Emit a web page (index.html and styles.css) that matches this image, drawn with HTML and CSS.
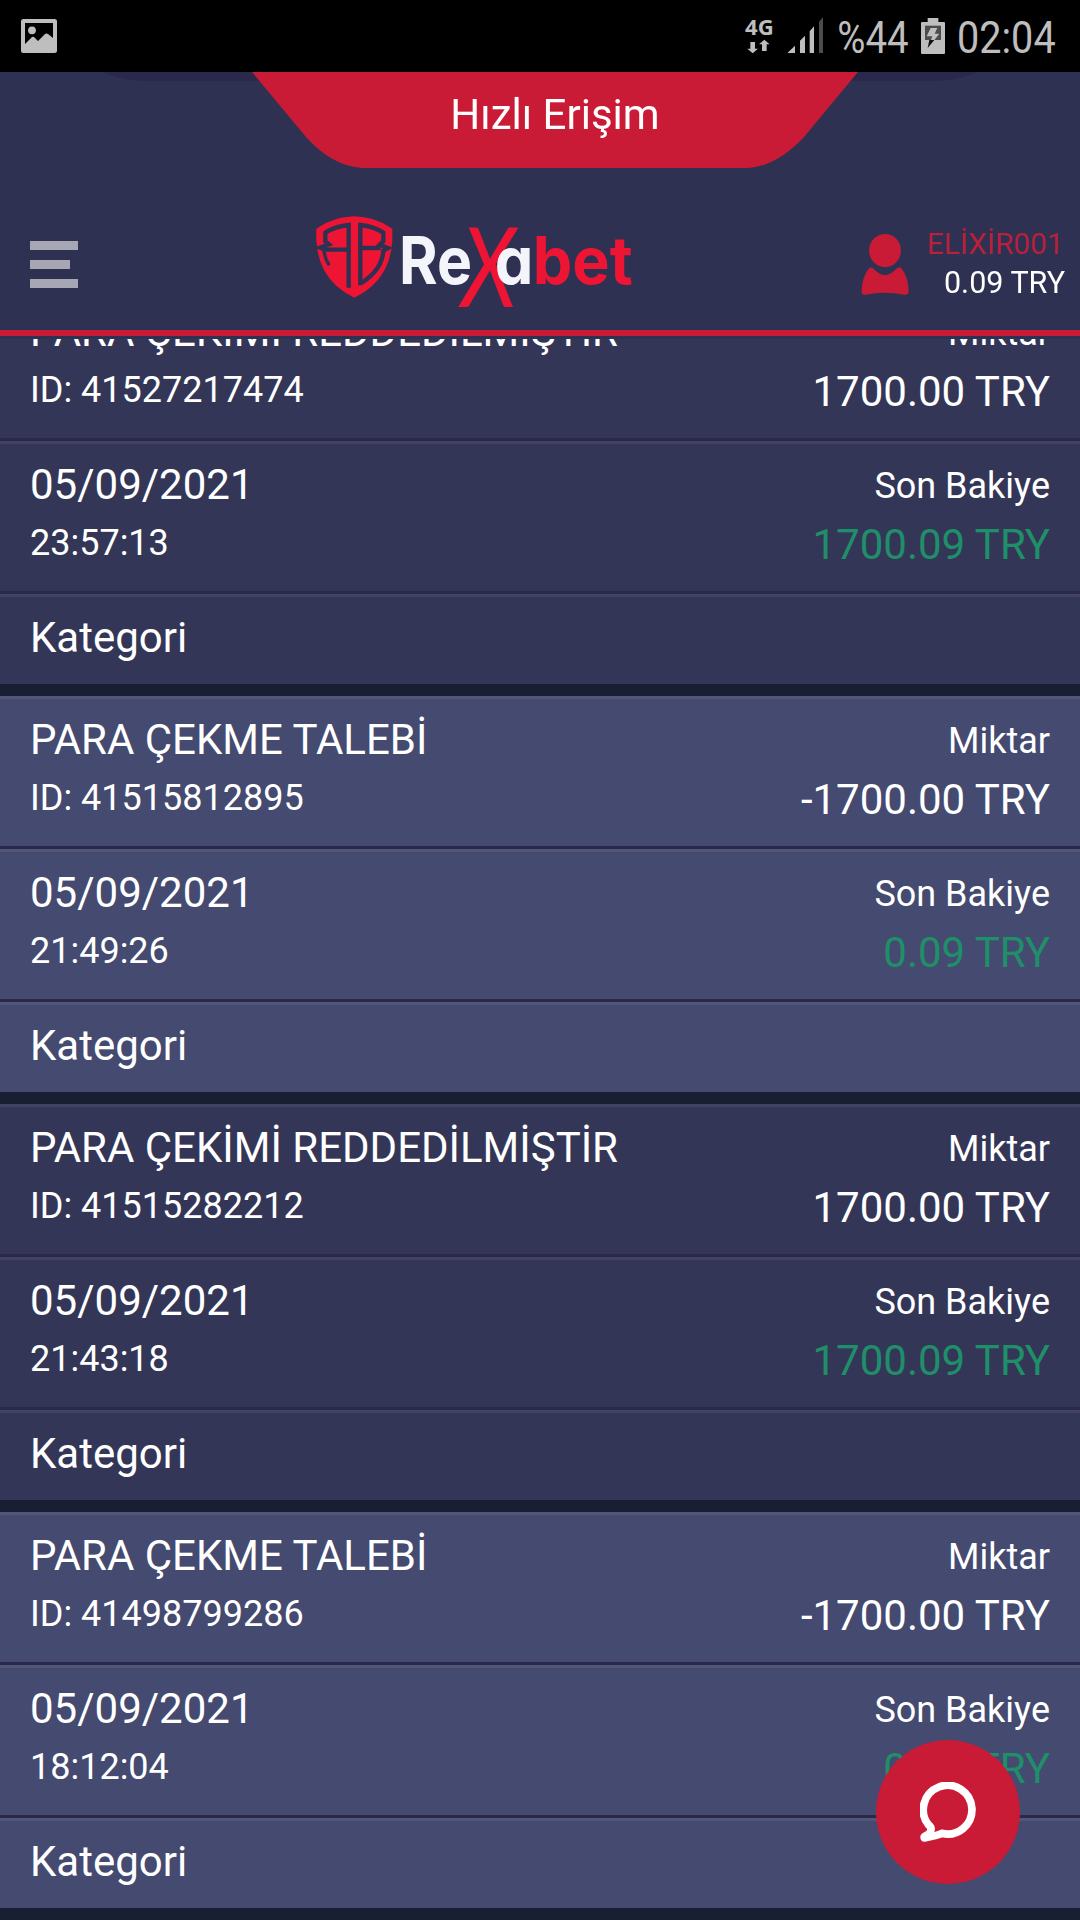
FILE: index.html
```html
<!DOCTYPE html>
<html lang="tr">
<head>
  <meta charset="UTF-8" />
  <meta name="viewport" content="width=device-width, initial-scale=1.0"/>
  <title>Rexabet</title>
  <link rel="stylesheet" href="styles.css">
</head>
<body>
  <header class="header">
    <div class="status-bar">
      <svg class="picture-icon" viewBox="0 0 36 34">
        <path fill-rule="evenodd" fill="#bebebe" d="M2.500 0H33.500Q36 0 36 2.500V31.500Q36 34 33.500 34H2.500Q0 34 0 31.500V2.500Q0 0 2.500 0ZM4 4V25L11 18Q12.500 17 14 19L17 22L24 15Q25.500 14 27 15L32 19V4Z"/>
        <circle cx="11" cy="11.300" r="3.900" fill="#bebebe"/>
      </svg>
      <svg class="status-icons" viewBox="0 0 1080 216">
        <g fill="#bebebe">
          <text x="75" y="105" class="net" textLength="86" lengthAdjust="spacingAndGlyphs">4G</text>
          <path d="M91 126h14v20h9l-16 14-16-14h9zM126 153h14v-20h9l-16-14-16 14h9z"/>
          <path d="M202 159L225 137V159ZM240 122L255 107V159H240ZM269 94L282 79V159H269Z"/>
          <path d="M297 65L309 52V159H297Z" fill="#4c4c4c"/>
          <text x="352" y="159" class="clock" textLength="214" lengthAdjust="spacingAndGlyphs">%44</text>
          <path d="M623 54h32v12h17q3 0 3 3v90q0 3-3 3h-66q-3 0-3-3v-90q0-3 3-3h17z"/>
          <path d="M615 77h48v43h-48z" fill="#4c4c4c"/>
          <path d="M632 84h20l-8 17h14l-15 19h-10l4-11h-17z"/>
          <path d="M628 120h15l-20 24z" fill="#111"/>
          <text x="711" y="159" class="clock" textLength="296" lengthAdjust="spacingAndGlyphs">02:04</text>
        </g>
      </svg>
    </div>

    <div class="quick-access">
      <svg class="quick-shape" viewBox="0 0 1080 96">
        <path fill="#2a294b" d="M103 0Q123 9 145 9H935Q957 9 977 0Z"/>
        <path fill="#ca1b36" d="M252 0L306 65Q332 94 362 96H748Q777 94 804 65L858 0Z"/>
      </svg>
      <span>Hızlı Erişim</span>
    </div>

    <nav class="nav">
      <div class="menu">
        <i></i>
        <i class="short"></i>
        <i></i>
      </div>

      <svg class="logo" viewBox="0 0 1050 390">
        <!-- shield -->
        <path d="M163 49Q226 50 277 86Q285 235 163 293Q41 235 49 86Q100 50 163 49Z" fill="#ee1433"/>
        <g fill="none" stroke="#2f3152" stroke-width="13">
          <path d="M146 263V75Q105 79 76 98V124L87 133L60 143L74 149H110M146 149H110"/>
          <path d="M181 256V75Q221 79 250 98V124L239 134L264 144L250 152Q247 208 186 248"/>
          <path d="M181 144H242"/>
          <path d="M71 147Q75 178 88 196" stroke-width="10"/>
        </g>
        <g class="wordmark">
          <text class="brush" x="484" y="321" fill="#ee1433" textLength="166" lengthAdjust="spacingAndGlyphs">X</text>
          <text x="297" y="253" fill="#f4f4fb" textLength="219" lengthAdjust="spacingAndGlyphs">Re</text>
          <text x="584" y="253" fill="#f4f4fb" textLength="116" lengthAdjust="spacingAndGlyphs">a</text>
          <text x="698" y="253" fill="#ee1433" textLength="300" lengthAdjust="spacingAndGlyphs">bet</text>
        </g>
      </svg>

      <div class="account">
        <svg class="avatar" viewBox="0 0 142 184">
          <ellipse cx="71" cy="50" rx="48" ry="50" fill="#ca1b36"/>
          <path fill="#ca1b36" d="M24 102Q30 99 36 104Q71 144 106 104Q112 99 119 102Q143 130 142 175Q141 184 130 183Q71 172 12 183Q1 184 0 175Q2 127 24 102Z"/>
        </svg>
        <div class="account-text">
          <div class="user">ELİXİR001</div>
          <div>0.09 TRY</div>
        </div>
      </div>
    </nav>
  </header>

  <main class="history">
    <section class="record">
      <div class="row">
        <div class="left"><p class="big">PARA ÇEKİMİ REDDEDİLMİŞTİR</p><p>ID: 41527217474</p></div>
        <div class="right"><p>Miktar</p><p class="big">1700.00 TRY</p></div>
      </div>
      <div class="row">
        <div class="left"><p class="big">05/09/2021</p><p>23:57:13</p></div>
        <div class="right"><p>Son Bakiye</p><p class="big green">1700.09 TRY</p></div>
      </div>
      <div class="row category"><div class="left"><p class="big">Kategori</p></div></div>
    </section>

    <section class="record alt">
      <div class="row">
        <div class="left"><p class="big">PARA ÇEKME TALEBİ</p><p>ID: 41515812895</p></div>
        <div class="right"><p>Miktar</p><p class="big">-1700.00 TRY</p></div>
      </div>
      <div class="row">
        <div class="left"><p class="big">05/09/2021</p><p>21:49:26</p></div>
        <div class="right"><p>Son Bakiye</p><p class="big green">0.09 TRY</p></div>
      </div>
      <div class="row category"><div class="left"><p class="big">Kategori</p></div></div>
    </section>

    <section class="record">
      <div class="row">
        <div class="left"><p class="big">PARA ÇEKİMİ REDDEDİLMİŞTİR</p><p>ID: 41515282212</p></div>
        <div class="right"><p>Miktar</p><p class="big">1700.00 TRY</p></div>
      </div>
      <div class="row">
        <div class="left"><p class="big">05/09/2021</p><p>21:43:18</p></div>
        <div class="right"><p>Son Bakiye</p><p class="big green">1700.09 TRY</p></div>
      </div>
      <div class="row category"><div class="left"><p class="big">Kategori</p></div></div>
    </section>

    <section class="record alt">
      <div class="row">
        <div class="left"><p class="big">PARA ÇEKME TALEBİ</p><p>ID: 41498799286</p></div>
        <div class="right"><p>Miktar</p><p class="big">-1700.00 TRY</p></div>
      </div>
      <div class="row">
        <div class="left"><p class="big">05/09/2021</p><p>18:12:04</p></div>
        <div class="right"><p>Son Bakiye</p><p class="big green">0.09 TRY</p></div>
      </div>
      <div class="row category"><div class="left"><p class="big">Kategori</p></div></div>
    </section>
  </main>

  <div class="chat-button">
    <svg viewBox="0 0 168 180">
      <path d="M32 146Q36 137 26 129A73 73 0 1 1 65 154Q56 160 13 168Q11 163 21 159Q30 156 32 146Z" fill="none" stroke="#fff" stroke-width="23" stroke-linejoin="round"/>
    </svg>
  </div>
</body>
</html>
```
FILE: styles.css
```css
* {
  margin: 0;
  padding: 0;
  box-sizing: border-box;
}

body {
  height: 1920px;
  overflow: hidden;
  background: #181f33;
  color: #fff;
  font-family: Roboto, Arial, sans-serif;
}

svg {
  display: block;
}

/* Header */
.header {
  position: fixed;
  top: 0;
  left: 0;
  width: 100%;
  height: 336px;
  z-index: 2;
  background: #2f3152;
  border-bottom: 6px solid #ca1b36;
  box-shadow: 0 3px 0 #2f3152;
}

.status-bar {
  display: flex;
  justify-content: space-between;
  align-items: center;
  height: 72px;
  padding-left: 21px;
  background: #000;
}

.picture-icon {
  width: 36px;
  height: 34px;
}

.status-icons {
  width: 360px;
  height: 72px;
}

.net {
  font: bold 64px "Open Sans", sans-serif;
}

.clock {
  font-size: 134px;
}

.quick-access {
  position: relative;
  height: 96px;
  font-size: 42px;
  line-height: 85px;
  text-align: center;
  padding-left: 30px;
}

.quick-access span {
  position: relative;
}

.quick-shape {
  position: absolute;
  top: 0;
  left: 0;
  width: 1080px;
  height: 96px;
}

.nav {
  display: grid;
  grid-template-columns: 270px 350px 1fr;
  height: 162px;
  padding: 32px 15px 0 30px;
}

.menu {
  display: flex;
  flex-direction: column;
  gap: 10px;
  padding-top: 41px;
}

.menu i {
  width: 48px;
  height: 9px;
  background: #a6a6b5;
}

.menu .short {
  width: 40px;
}

.logo {
  width: 350px;
  height: 130px;
  overflow: visible;
}

.wordmark {
  font-family: Inter, sans-serif;
  font-size: 196px;
  font-weight: 700;
  font-feature-settings: "cv11";
}

.brush {
  font-family: Lato, sans-serif;
  font-size: 335px;
  font-weight: 400;
  font-style: italic;
}

.account {
  display: flex;
  justify-content: flex-end;
  align-items: flex-start;
  gap: 15px;
  padding-top: 24px;
}

.avatar {
  width: 48px;
  height: 61px;
  margin-top: 10px;
}

.account-text {
  width: 141px;
  font-size: 30.5px;
  line-height: 39px;
  text-align: right;
}

.user {
  color: #b8203c;
  font-size: 29.8px;
  padding-right: 1px;
}

/* Transaction list */
.history {
  padding-top: 288px;
}

.record {
  margin-bottom: 12px;
  background: #343657;
}

.row {
  display: flex;
  justify-content: space-between;
  height: 153px;
  padding: 12px 30px 0;
  border-top: 3px solid #414264;
  border-bottom: 3px solid #2a294b;
  font-size: 36px;
}

.category {
  height: 90px;
  border-bottom: none;
}

.alt {
  background: #454a70;
}

.alt .row {
  border-top-color: #525779;
}

.left {
  line-height: 58px;
}

.right {
  line-height: 58px;
  padding-top: 1px;
  text-align: right;
}

.right .big {
  line-height: 60px;
}

.big {
  font-size: 42px;
}

.green {
  color: #1f8f69;
}

/* Live chat */
.chat-button {
  position: fixed;
  left: 876px;
  top: 1740px;
  z-index: 3;
  display: flex;
  justify-content: center;
  align-items: center;
  width: 144px;
  height: 144px;
  border-radius: 50%;
  background: #ca1b36;
}

.chat-button svg {
  width: 56px;
  height: 60px;
}
```
